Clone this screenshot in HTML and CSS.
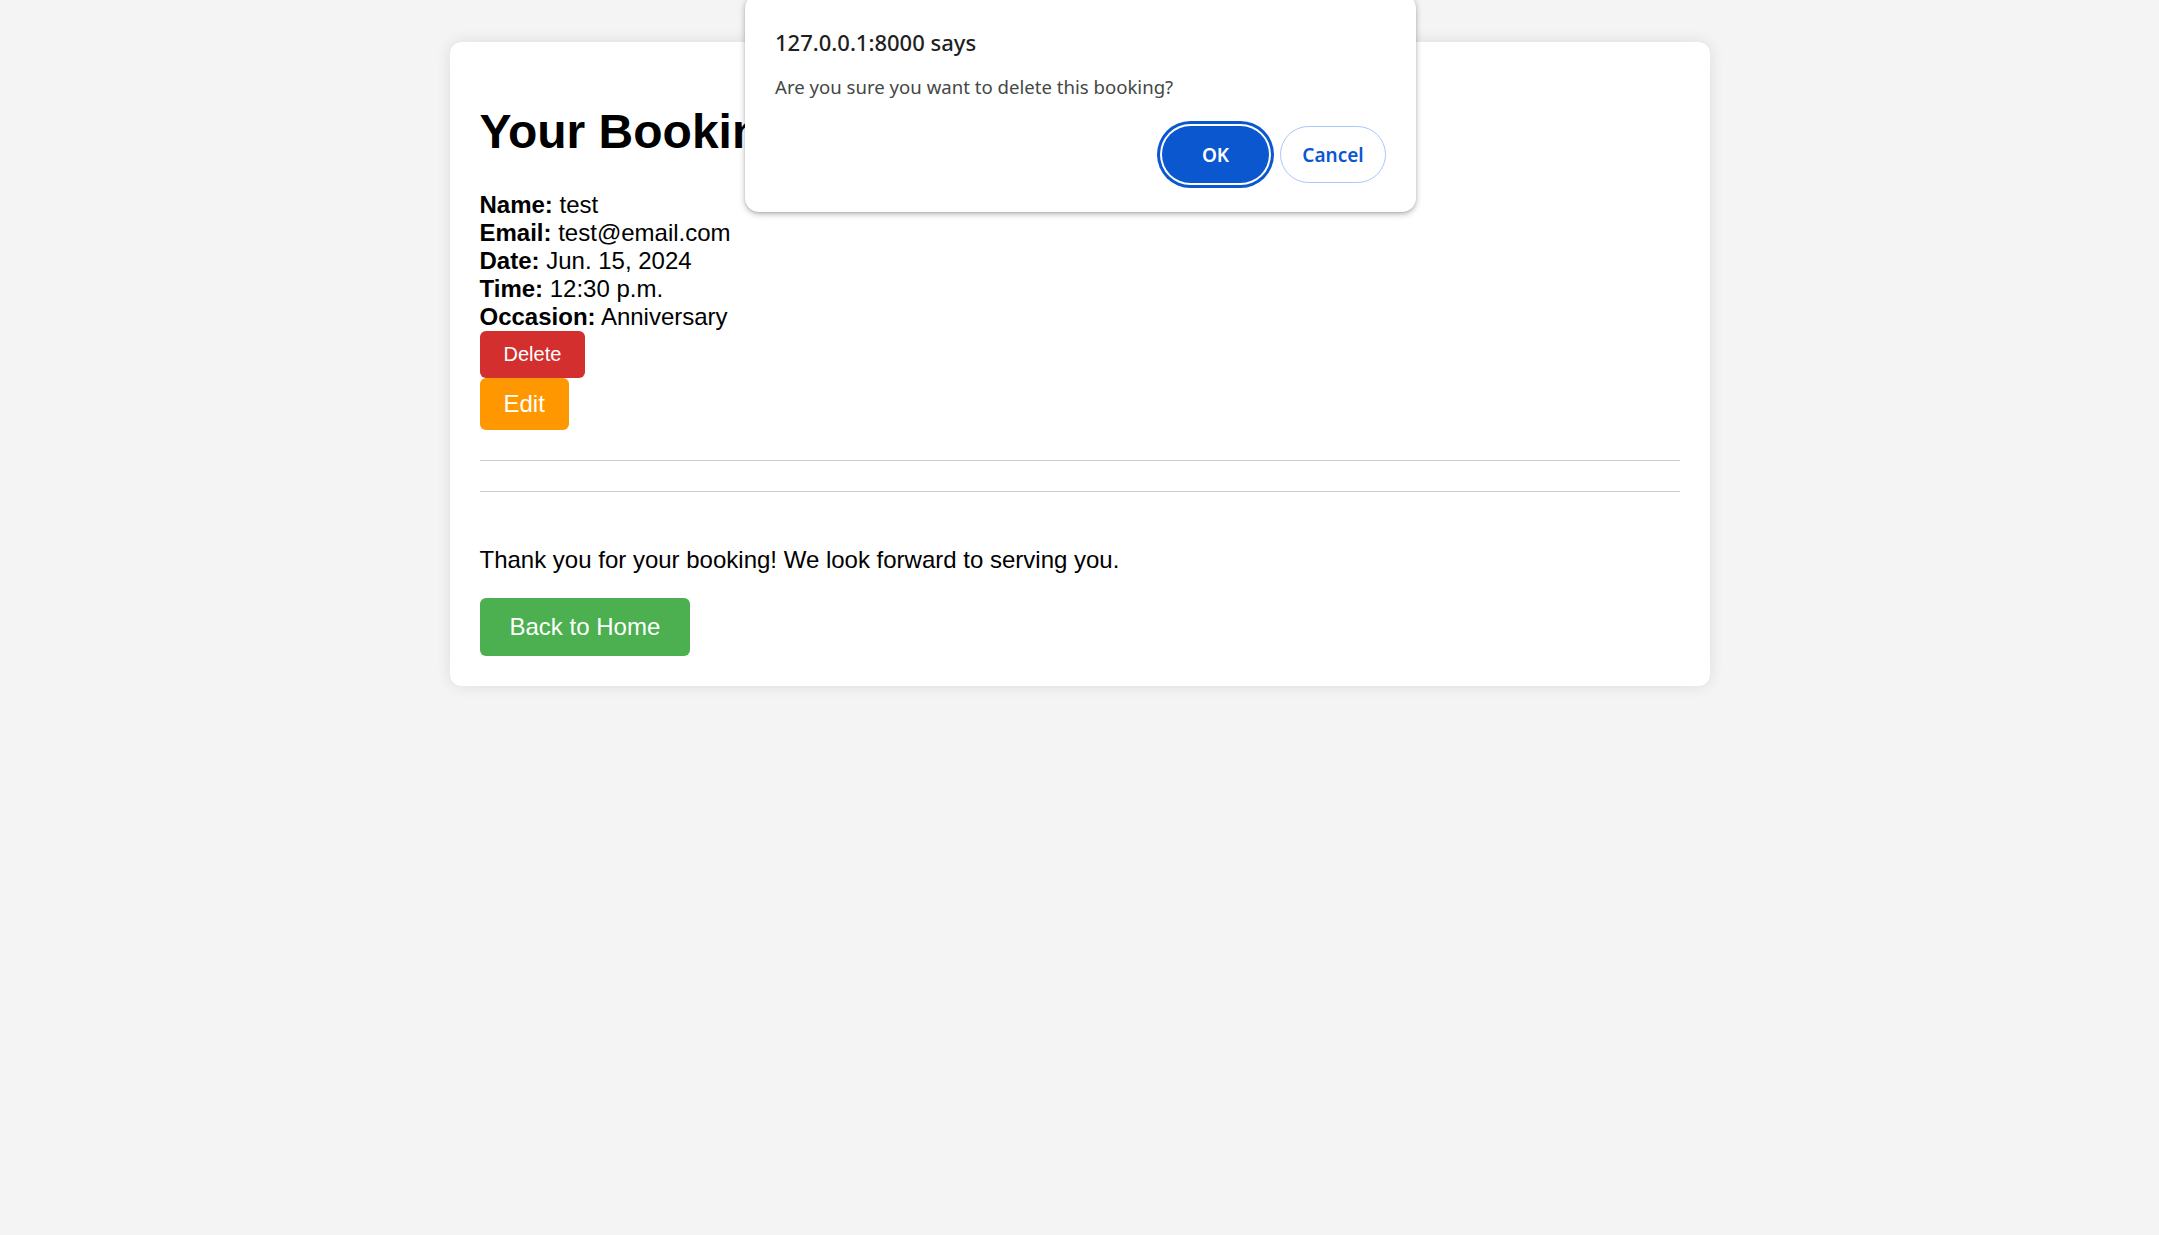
FILE: index.html
```html
<!DOCTYPE html>
<html lang="en">
<head>
<meta charset="utf-8">
<title>Your Bookings</title>
<link rel="stylesheet" href="styles.css">
</head>
<body>
<main class="card">
  <h1 class="title">Your Bookings</h1>
  <div class="booking">
    <div class="line"><strong>Name:</strong> test</div>
    <div class="line"><strong>Email:</strong> test@email.com</div>
    <div class="line"><strong>Date:</strong> Jun. 15, 2024</div>
    <div class="line"><strong>Time:</strong> 12:30 p.m.</div>
    <div class="line"><strong>Occasion:</strong> Anniversary</div>
    <div class="actions">
      <button class="btn btn-delete" type="button">Delete</button>
      <a class="btn btn-edit" href="#">Edit</a>
    </div>
  </div>
  <hr class="rule rule-first">
  <hr class="rule rule-second">
  <p class="thanks">Thank you for your booking! We look forward to serving you.</p>
  <a class="btn btn-home" href="#">Back to Home</a>
</main>

<div class="dialog" role="alertdialog">
  <div class="dialog-title">127.0.0.1:8000 says</div>
  <div class="dialog-msg">Are you sure you want to delete this booking?</div>
  <div class="dialog-buttons">
    <button class="dbtn dbtn-ok" type="button">OK</button>
    <button class="dbtn dbtn-cancel" type="button">Cancel</button>
  </div>
</div>
</body>
</html>
```

FILE: styles.css
```css
html, body {
  margin: 0;
  padding: 0;
}

body {
  background: #f4f4f4;
  font-family: "Liberation Sans", Arial, sans-serif;
  font-size: 24px;
  color: #000;
  padding-top: 42px;
  min-height: 1235px;
  box-sizing: border-box;
}

.card {
  display: block;
  width: 1200px;
  margin: 0 auto;
  padding: 30px;
  background: #fff;
  border-radius: 12px;
  box-shadow: 0 0 15px rgba(0, 0, 0, 0.1);
}

.title {
  font-size: 48px;
  font-weight: bold;
  margin: 32px 0;
  line-height: normal;
  white-space: nowrap;
}

.booking {
  display: flex;
  flex-direction: column;
}

.line {
  line-height: normal;
}

.line strong {
  font-weight: bold;
}

.actions {
  display: flex;
  flex-direction: column;
  align-items: flex-start;
}

.btn {
  display: inline-block;
  border: none;
  border-radius: 6px;
  color: #fff;
  text-decoration: none;
  font-family: "Liberation Sans", Arial, sans-serif;
  line-height: normal;
  cursor: pointer;
}

.btn-delete {
  background: #d32f2f;
  font-size: 20px;
  padding: 12px 24px;
}

.btn-edit {
  background: #ff9800;
  font-size: 24px;
  padding: 12px 24px;
}

.rule {
  border: none;
  border-top: 1px solid #cccccc;
  height: 0;
  margin: 0;
}

.rule-first {
  margin-top: 30px;
}

.rule-second {
  margin-top: 30px;
}

.thanks {
  margin: 54px 0 24px;
  line-height: normal;
}

.btn-home {
  background: #4caf50;
  font-size: 24px;
  padding: 15px 30px;
}

/* Browser alert dialog overlay */
.dialog {
  position: absolute;
  left: 745px;
  top: -6px;
  width: 671px;
  box-sizing: border-box;
  padding: 33px 30px 29px;
  background: #fff;
  border-radius: 14px;
  box-shadow: 0 2px 6px rgba(0, 0, 0, 0.28), 0 1px 2px rgba(0, 0, 0, 0.12);
  font-family: "Noto Sans", "Open Sans", sans-serif;
  color: #1f1f1f;
}

.dialog-title {
  font-size: 22px;
  line-height: 30px;
  font-weight: 500;
  color: #1f1f1f;
}

.dialog-msg {
  margin-top: 17px;
  font-size: 18.6px;
  line-height: 26px;
  color: #444746;
}

.dialog-buttons {
  margin-top: 26px;
  display: flex;
  justify-content: flex-end;
  gap: 11px;
}

.dbtn {
  height: 57px;
  border-radius: 29px;
  font-family: "Noto Sans", "Open Sans", sans-serif;
  font-size: 19px;
  font-weight: 600;
  padding: 0;
  cursor: pointer;
}

.dbtn-ok {
  width: 107px;
  background: #0b57d0;
  color: #fff;
  border: none;
  box-shadow: 0 0 0 2px #fff, 0 0 0 5px #0b57d0;
}

.dbtn-cancel {
  width: 106px;
  background: #fff;
  color: #0b57d0;
  border: 1px solid #a8c7fa;
}
```
